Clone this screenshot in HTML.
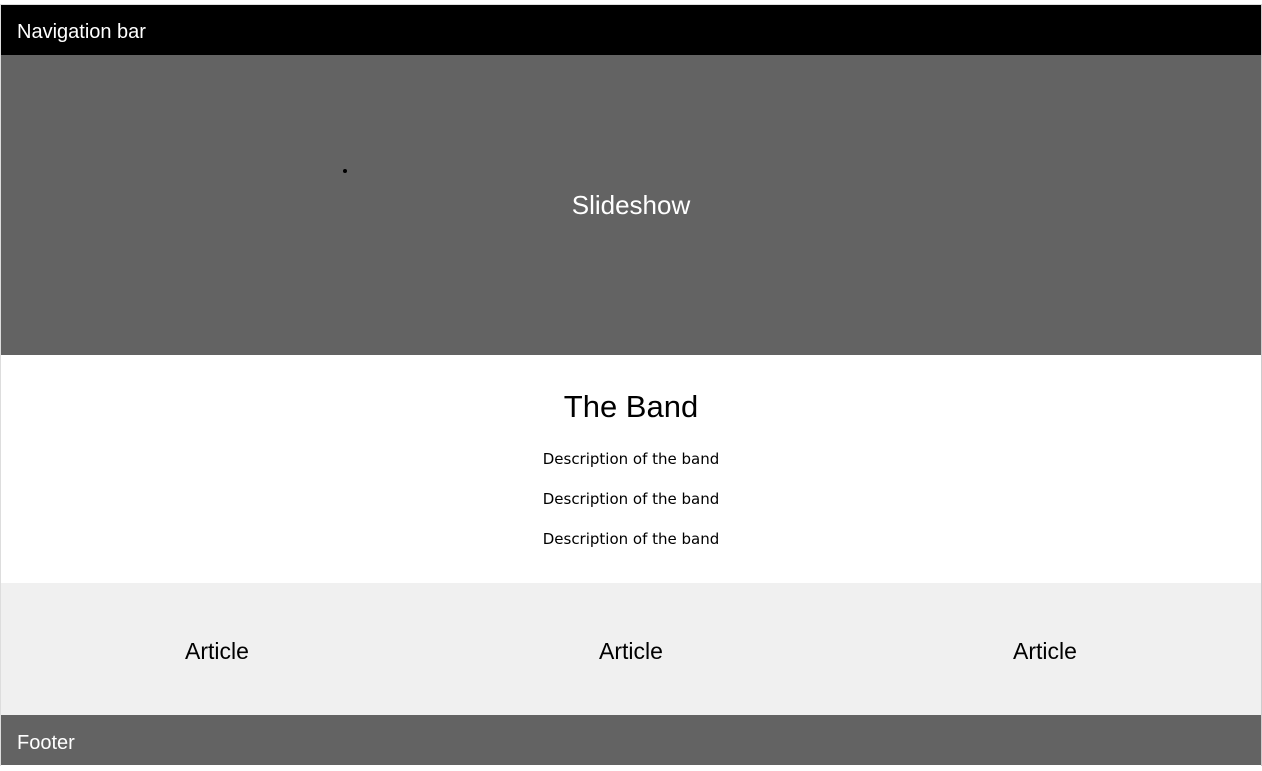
<!DOCTYPE html>
<html><head><style>
html,body{margin:0;padding:0;background:#fff;width:1262px;height:765px;overflow:hidden;font-family:"Liberation Sans",sans-serif}
.wrap{position:absolute;left:0;top:4px;width:1260px;height:761px;border-top:1px solid #ddd;border-right:1px solid #ccc;border-left:1px solid #ddd}
.nav{height:50px;background:#000;color:#fff;font-size:20px;line-height:54px;padding-left:16px}
.slide{height:300px;background:#636363;color:#fff;font-size:26px;text-align:center;line-height:300px;position:relative}
.dot{position:absolute;left:342px;top:114px;width:4px;height:4px;border-radius:50%;background:#000}
.band{height:228px;text-align:center}
.band h1{margin:0;padding-top:33px;font-weight:normal;font-size:31px;line-height:38px}
.band p{margin:0;font-family:"DejaVu Sans",sans-serif;font-size:15px;line-height:40px}
.band p:first-of-type{margin-top:13px}
.arts{height:132px;background:#f0f0f0;display:flex;padding:0 9px}
.arts div{flex:1;text-align:center;line-height:136px;font-size:23px}
.foot{height:50px;background:#636363;color:#fff;font-size:20px;line-height:56px;padding-left:16px}
</style></head><body><div class="wrap">
<div class="nav">Navigation bar</div>
<div class="slide"><div class="dot"></div>Slideshow</div>
<div class="band"><h1>The Band</h1><p>Description of the band</p><p>Description of the band</p><p>Description of the band</p></div>
<div class="arts"><div>Article</div><div>Article</div><div>Article</div></div>
<div class="foot">Footer</div>
</div></body></html>
